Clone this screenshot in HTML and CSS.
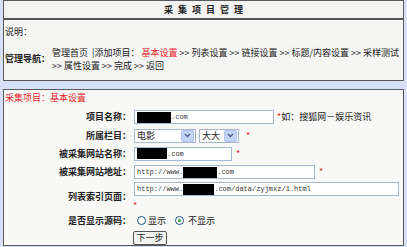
FILE: index.html
```html
<!DOCTYPE html>
<html lang="zh-CN">
<head>
    <meta charset="UTF-8">
    <title>采集项目管理</title>
    <link rel="stylesheet" href="styles.css">
</head>
<body>
    <!-- cabecera con la navegacion -->
    <div class="box">
        <div class="box-title">采集项目管理</div>
        <div class="note">说明：</div>
        <div class="nav">
            <span class="nav-label">管理导航：</span>
            <div class="nav-links">
                <span>管理首页 &nbsp;|添加项目：</span>
                <span class="red">基本设置</span>
                <span>&gt;&gt; 列表设置</span>
                <span>&gt;&gt; 链接设置</span>
                <span>&gt;&gt; 标题/内容设置</span>
                <span>&gt;&gt; 采样测试</span>
                <span>&gt;&gt; 属性设置</span>
                <span>&gt;&gt; 完成</span>
                <span>&gt;&gt; 返回</span>
            </div>
        </div>
    </div>

    <!-- formulario basico -->
    <form class="box form-box">
        <div class="step red">采集项目：基本设置</div>
        <div class="row r1">
            <label>项目名称：</label>
            <div class="field">
                <span class="input w138"><span class="mask w34"></span><span class="mono">.com</span></span>
                <span class="red hint">*</span><span>如：搜狐网－娱乐资讯</span>
            </div>
        </div>
        <div class="row r2">
            <label>所属栏目：</label>
            <div class="field">
                <span class="select w60"><span>电影</span><span class="arrow"><svg width="7" height="5" viewBox="0 0 7 5"><path d="M1 1 L3.5 3.5 L6 1" fill="none" stroke="#4d6185" stroke-width="1.4"/></svg></span></span>
                <span class="select w38"><span>大大</span><span class="arrow"><svg width="7" height="5" viewBox="0 0 7 5"><path d="M1 1 L3.5 3.5 L6 1" fill="none" stroke="#4d6185" stroke-width="1.4"/></svg></span></span>
                <span class="red star">*</span>
            </div>
        </div>
        <div class="row r3">
            <label>被采集网站名称：</label>
            <div class="field">
                <span class="input w96"><span class="mask w30"></span><span class="mono">.com</span></span>
                <span class="red star">*</span>
            </div>
        </div>
        <div class="row r4">
            <label>被采集网站地址：</label>
            <div class="field">
                <span class="input w179"><span class="mono">http://www.</span><span class="mask w34"></span><span class="mono">.com</span></span>
                <span class="red star">*</span>
            </div>
        </div>
        <div class="row r5">
            <label>列表索引页面：</label>
            <div class="field col">
                <span class="input w263"><span class="mono">http://www.</span><span class="mask w31"></span><span class="mono">.com/data/zyjmxz/1.html</span></span>
                <span class="red star-low">*</span>
            </div>
        </div>
        <div class="row r6">
            <label>是否显示源码：</label>
            <div class="field">
                <span class="radio"></span><span class="opt">显示</span>
                <span class="radio checked"></span><span class="opt">不显示</span>
            </div>
        </div>
        <div class="row r7">
            <span></span>
            <div class="field">
                <button type="button">下一步</button>
            </div>
        </div>
    </form>
</body>
</html>
```

FILE: styles.css
```css
body {
    font-family: "Noto Sans CJK SC", "Noto Sans", sans-serif;
    font-size: 9px;
    line-height: 12px;
    color: #222;
    background-color: #d6e0f6;
    margin: 0;
    padding: 0 3px;
}

.red {
    color: #e8242a;
}

.box {
    border: 1px solid #5a5a5a;
    background-color: #f5f5f3;
}

.box-title {
    height: 17px;
    line-height: 17px;
    text-align: center;
    font-weight: bold;
    letter-spacing: 5px;
    padding-left: 5px;
    border-bottom: 2px solid #555;
    background-color: #f3f3f1;
}

.note {
    height: 24px;
    line-height: 24px;
    padding-left: 1px;
}

.nav {
    display: flex;
    align-items: center;
    height: 30px;
    padding: 0 0 6px 1px;
}

.nav-label {
    font-weight: bold;
    white-space: nowrap;
    width: 47px;
    flex-shrink: 0;
}

.nav-links {
    display: flex;
    flex-wrap: wrap;
    column-gap: 2px;
    line-height: 13px;
}

.nav-links span {
    white-space: nowrap;
}

.form-box {
    display: block;
    margin: 8px 0 0;
    height: 155px;
    background-color: #f8f8f6;
}

.step {
    height: 17px;
    line-height: 15px;
    padding-left: 1px;
}

.row {
    display: grid;
    grid-template-columns: 127px 1fr;
    column-gap: 3px;
    align-items: center;
}

.row label {
    text-align: right;
    font-weight: bold;
}

.r1 { height: 20px; }
.r2 { height: 17px; }
.r3 { height: 19px; }
.r4 { height: 18px; }
.r5 { height: 30px; }
.r6 { height: 19px; }
.r7 { height: 15px; }

.field {
    display: flex;
    align-items: center;
}

.field.col {
    flex-direction: column;
    align-items: flex-start;
    padding-top: 1px;
}

.input {
    display: flex;
    align-items: center;
    height: 12px;
    border: 1px solid #a5b8cf;
    background-color: #fff;
    padding-left: 2px;
    overflow: hidden;
    box-sizing: content-box;
}

.w138 { width: 136px; }
.w96 { width: 94px; }
.w179 { width: 177px; }
.w263 { width: 261px; }

.mask {
    display: inline-block;
    height: 11px;
    background-color: #000;
}

.w34 { width: 34px; }
.w30 { width: 30px; }
.w31 { width: 31px; }

.mono {
    font-family: "Liberation Mono", monospace;
    font-size: 7px;
    color: #333;
}

.hint {
    margin-left: 3px;
}

.star {
    margin-left: 4px;
}

.star-low {
    margin-top: 4px;
    margin-left: -1px;
}

.select {
    display: flex;
    align-items: center;
    justify-content: space-between;
    height: 12px;
    border: 1px solid #a5b8cf;
    background-color: #fff;
    padding-left: 2px;
    margin-right: 3px;
    box-sizing: content-box;
}

.w60 { width: 58px; }
.w38 { width: 36px; }

.arrow {
    display: flex;
    align-items: center;
    justify-content: center;
    width: 11px;
    height: 10px;
    margin-right: 1px;
    background-color: #c3d3f7;
    border: 1px solid #b3c5ee;
    border-radius: 2px;
}

.radio {
    width: 7px;
    height: 7px;
    border: 1px solid #1d5281;
    border-radius: 50%;
    background-color: #fff;
    margin-left: 3px;
    position: relative;
}

.radio.checked {
    margin-left: 9px;
}

.radio.checked::after {
    content: "";
    position: absolute;
    left: 2px;
    top: 2px;
    width: 3px;
    height: 3px;
    border-radius: 50%;
    background-color: #2b9d2b;
}

.opt {
    margin-left: 2px;
}

.radio.checked + .opt {
    margin-left: 4px;
}

button {
    font-family: inherit;
    font-size: 9px;
    line-height: 11px;
    width: 34px;
    height: 14px;
    padding: 0;
    margin-left: -1px;
    border: 1px solid #555;
    border-radius: 2px;
    background-color: #f4f4f0;
    color: #222;
}
```
